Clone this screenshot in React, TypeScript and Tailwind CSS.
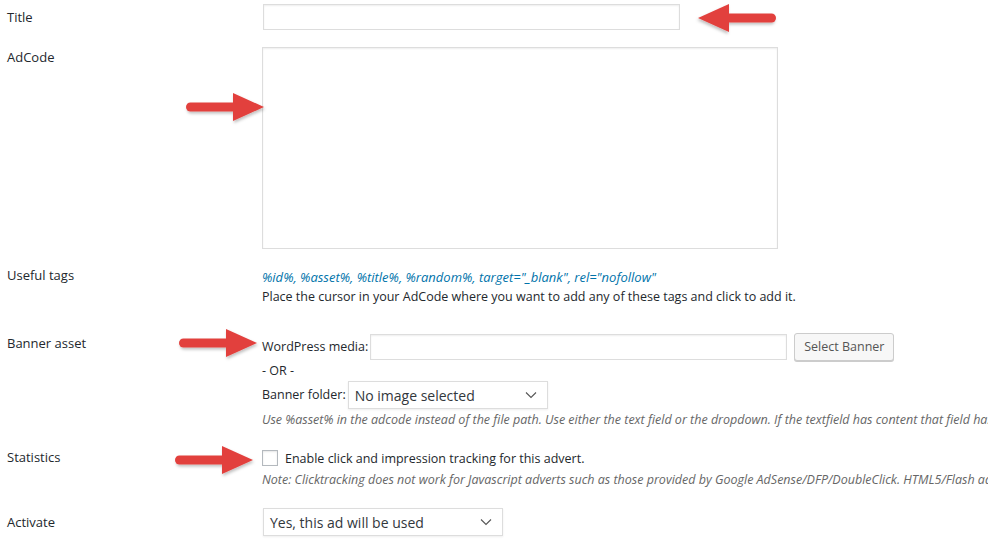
import React from "react";

function Arrow({ left = false, w = 80, h = 30 }: { left?: boolean; w?: number; h?: number }) {
  return (
    <svg width={w} height={h} viewBox="0 0 80 30" style={{ transform: left ? "scaleX(-1)" : undefined, overflow: "visible" }}>
      <defs>
        <filter id="sh" x="-20%" y="-30%" width="140%" height="160%">
          <feDropShadow dx="1" dy="2" stdDeviation="1.5" floodColor="#000" floodOpacity="0.25" />
        </filter>
      </defs>
      <g filter="url(#sh)" fill="#e2403d">
        <rect x="1" y="10.5" width="52" height="9" rx="4.5" />
        <polygon points="48,1 79,15 48,29" />
      </g>
    </svg>
  );
}

function Chevron() {
  return (
    <svg width="12" height="8" viewBox="0 0 12 8" className="shrink-0">
      <path d="M1 1.5 L6 6.5 L11 1.5" fill="none" stroke="#555" strokeWidth="1.1" />
    </svg>
  );
}

const font = { fontFamily: '"Open Sans", "Noto Sans", Arial, sans-serif' };

export default function App() {
  return (
    <div className="relative w-[988px] h-[540px] overflow-hidden bg-white text-[13px] text-[#23282d]" style={font}>
      <div className="pl-[7px] pt-[4px] flex flex-col">
        {/* Title */}
        <div className="flex">
          <div className="w-[255px] shrink-0 pt-[4px] leading-[18px]">Title</div>
          <div className="h-[26px] w-[417px] shrink-0 border border-[#ddd] shadow-[inset_0_1px_2px_rgba(0,0,0,0.07)] bg-white ml-[1px]" />
        </div>
        {/* AdCode */}
        <div className="flex mt-[17px]">
          <div className="w-[255px] shrink-0 pt-[1px] leading-[18px]">AdCode</div>
          <div className="h-[202px] w-[516px] shrink-0 border border-[#ddd] shadow-[inset_0_1px_2px_rgba(0,0,0,0.07)] bg-white" />
        </div>
        {/* Useful tags */}
        <div className="flex mt-[18px]">
          <div className="w-[255px] shrink-0 leading-[18px] mt-[-1px]">Useful tags</div>
          <div className="flex flex-col leading-[20px] whitespace-nowrap">
            <div className="italic text-[#0073aa] text-[13px]">%id%, %asset%, %title%, %random%, target="_blank", rel="nofollow"</div>
            <div className="text-[12.5px]">Place the cursor in your AdCode where you want to add any of these tags and click to add it.</div>
          </div>
        </div>
        {/* Banner asset */}
        <div className="flex mt-[26px]">
          <div className="w-[255px] shrink-0 pt-[1px] leading-[18px]">Banner asset</div>
          <div className="flex flex-col whitespace-nowrap">
            <div className="flex items-center">
              <span className="text-[12.5px] mr-[2px]">WordPress media:</span>
              <div className="h-[26px] w-[417px] shrink-0 border border-[#ddd] shadow-[inset_0_1px_2px_rgba(0,0,0,0.07)] bg-white" />
              <div className="ml-[7px] h-[28px] px-[9px] shrink-0 flex items-center border border-[#ccc] rounded-[3px] bg-[#f7f7f7] shadow-[0_1px_0_#ccc] text-[#555] text-[12.5px]">Select Banner</div>
            </div>
            <div className="text-[12.5px] leading-[18px] mt-[1px]">- OR -</div>
            <div className="flex items-center mt-[1px]">
              <span className="text-[12.5px] mr-[2px]">Banner folder:</span>
              <div className="h-[28px] w-[200px] shrink-0 border border-[#ddd] bg-white flex items-center justify-between pl-[6px] pr-[10px] shadow-[0_1px_2px_rgba(0,0,0,0.07)]">
                <span className="text-[14px] text-[#32373c]">No image selected</span>
                <Chevron />
              </div>
            </div>
            <div className="italic text-[#666] text-[12.5px] leading-[18px] mt-[2px]">Use %asset% in the adcode instead of the file path. Use either the text field or the dropdown. If the textfield has content that field has priority.</div>
          </div>
        </div>
        {/* Statistics */}
        <div className="flex mt-[22px]">
          <div className="w-[255px] shrink-0 leading-[18px] mt-[-3px]">Statistics</div>
          <div className="flex flex-col whitespace-nowrap">
            <div className="flex items-center mt-[-3px]">
              <div className="w-[16px] h-[16px] shrink-0 border border-[#b4b9be] bg-white shadow-[inset_0_1px_2px_rgba(0,0,0,0.1)]" />
              <span className="ml-[7px] text-[12.5px] leading-[18px] pt-[2px]">Enable click and impression tracking for this advert.</span>
            </div>
            <div className="italic text-[#666] text-[12.5px] leading-[18px] mt-[3px]">Note: Clicktracking does not work for Javascript adverts such as those provided by Google AdSense/DFP/DoubleClick. HTML5/Flash adverts are not always supported.</div>
          </div>
        </div>
        {/* Activate */}
        <div className="flex mt-[19px]">
          <div className="w-[255px] shrink-0 pt-[5px] leading-[18px]">Activate</div>
          <div className="h-[28px] w-[240px] shrink-0 ml-[1px] border border-[#ddd] bg-white flex items-center justify-between pl-[6px] pr-[10px] shadow-[0_1px_2px_rgba(0,0,0,0.07)]">
            <span className="text-[14px] text-[#32373c]">Yes, this ad will be used</span>
            <Chevron />
          </div>
        </div>
      </div>

      {/* Arrows */}
      <div className="absolute left-[697px] top-[3px]"><Arrow left /></div>
      <div className="absolute left-[185px] top-[92px]"><Arrow /></div>
      <div className="absolute left-[178px] top-[328px]"><Arrow /></div>
      <div className="absolute left-[174px] top-[445px]"><Arrow /></div>
    </div>
  );
}
